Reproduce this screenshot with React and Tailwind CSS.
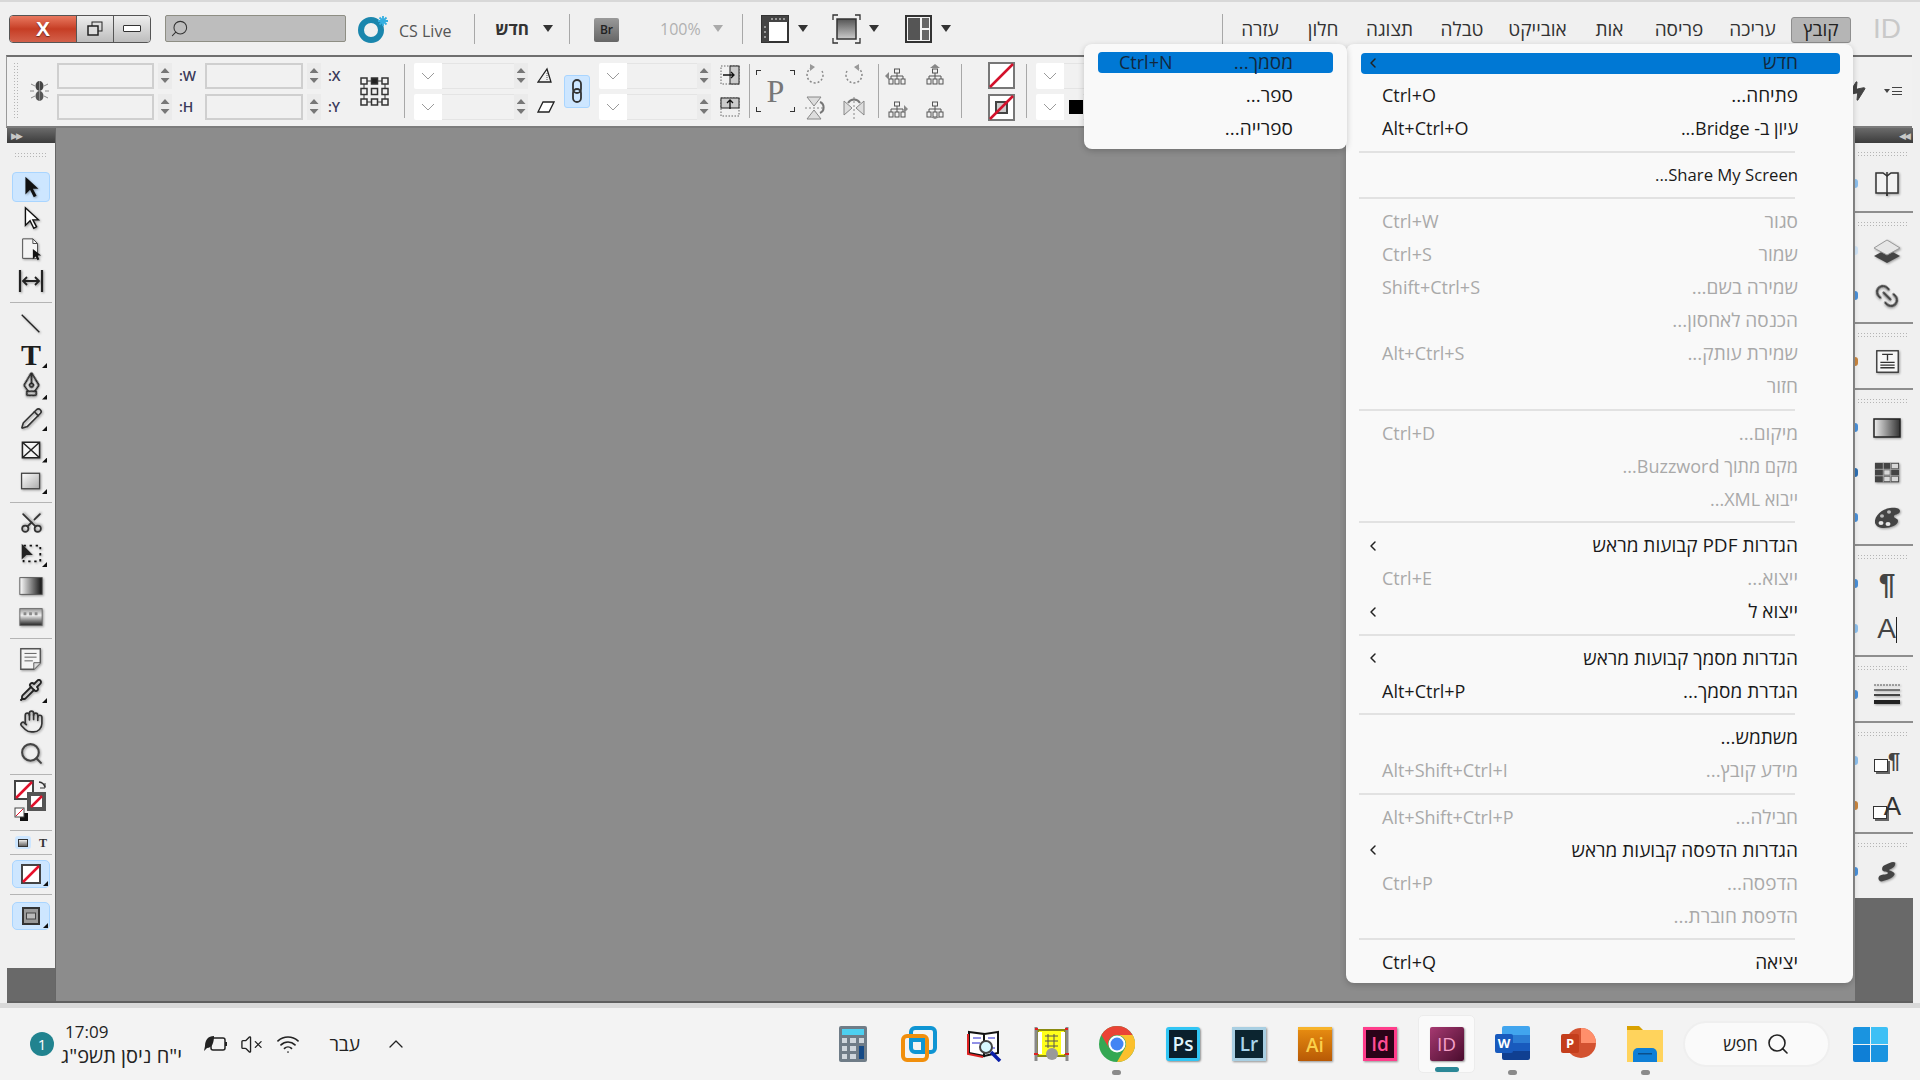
import { ChevronLeft, ChevronUp, Hand, Link2, Pencil, PenTool, Pipette, Scissors, Search, VolumeX, Wifi, Zap } from 'lucide-react';

const menuItems = [
  { t: 'חדש', active: true, sub: true },
  { t: 'פתיחה...', k: 'Ctrl+O' },
  { t: 'עיון ב- Bridge...', k: 'Alt+Ctrl+O', size: 'text-[18px]' },
  { sep: true },
  { t: 'Share My Screen...', size: 'text-[16.7px]' },
  { sep: true },
  { t: 'סגור', k: 'Ctrl+W', off: true },
  { t: 'שמור', k: 'Ctrl+S', off: true },
  { t: 'שמירה בשם...', k: 'Shift+Ctrl+S', off: true },
  { t: 'הכנסה לאחסון...', off: true },
  { t: 'שמירת עותק...', k: 'Alt+Ctrl+S', off: true },
  { t: 'חזור', off: true },
  { sep: true },
  { t: 'מיקום...', k: 'Ctrl+D', off: true },
  { t: 'מקם מתוך Buzzword...', off: true, size: 'text-[18px]' },
  { t: 'ייבוא XML...', off: true, size: 'text-[18px]' },
  { sep: true },
  { t: 'הגדרות PDF קבועות מראש', sub: true },
  { t: 'ייצוא...', k: 'Ctrl+E', off: true },
  { t: 'ייצוא ל', sub: true },
  { sep: true },
  { t: 'הגדרות מסמך קבועות מראש', sub: true },
  { t: 'הגדרת מסמך...', k: 'Alt+Ctrl+P' },
  { sep: true },
  { t: 'משתמש...' },
  { t: 'מידע קובץ...', k: 'Alt+Shift+Ctrl+I', off: true },
  { sep: true },
  { t: 'חבילה...', k: 'Alt+Shift+Ctrl+P', off: true },
  { t: 'הגדרות הדפסה קבועות מראש', sub: true },
  { t: 'הדפסה...', k: 'Ctrl+P', off: true },
  { t: 'הדפסת חוברת...', off: true },
  { sep: true },
  { t: 'יציאה', k: 'Ctrl+Q' },
];

const topMenu = [
  ['עזרה', 'w-[62px]'],
  ['חלון', 'w-[64px]'],
  ['תצוגה', 'w-[69px]'],
  ['טבלה', 'w-[76px]'],
  ['אובייקט', 'w-[75px]'],
  ['אות', 'w-[69px]'],
  ['פריסה', 'w-[70px]'],
  ['עריכה', 'w-[77px]'],
];

const Tri = ({ className = 'bg-[#333]' }) => (
  <span className={`block w-[10px] h-[7px] [clip-path:polygon(0_0,100%_0,50%_100%)] ${className}`} />
);

const Sep = ({ className = '' }) => <span className={`block w-[1px] bg-[#a8a8a8] ${className}`} />;

const Svg = ({ s = 28, children, className = '' }) => (
  <svg width={s} height={s} viewBox="0 0 28 28" fill="none" className={`drop-shadow-[1px_1px_1px_rgba(0,0,0,0.35)] ${className}`}>
    {children}
  </svg>
);

const Grip = ({ className = '' }) => (
  <div className={`h-[5px] bg-[radial-gradient(#b5b5b5_1px,transparent_1px)] bg-[length:3px_3px] ${className}`} />
);

function Spinner() {
  return (
    <div className="w-[14px] h-[26px] flex flex-col items-center justify-center gap-[5px] bg-[#ebebeb]">
      <span className="block w-[9px] h-[5px] bg-[#777] [clip-path:polygon(50%_0,100%_100%,0_100%)]" />
      <span className="block w-[9px] h-[5px] bg-[#777] [clip-path:polygon(0_0,100%_0,50%_100%)]" />
    </div>
  );
}

function Field({ label, w = 'w-[97px]' }) {
  return (
    <div className="flex items-center h-[26px]">
      <div className={`${w} h-[26px] border-2 border-[#cfcfcf] bg-[#f1f1f1]`} />
      <div className="ml-[4px]"><Spinner /></div>
      <span className="ml-[7px] w-[16px] text-[14px] font-semibold text-[#3a3a5a] leading-none">{label}</span>
    </div>
  );
}

function Combo({ w = 'w-[114px]', swatch }) {
  return (
    <div className={`${w} h-[26px] flex items-center bg-[#f1f1f1]`}>
      <div className="w-[28px] h-[26px] bg-white rounded-l-[2px] flex items-center justify-center text-[#9a9a9a]">
        <svg width="14" height="8" viewBox="0 0 14 8" fill="none"><path d="M1 1l6 6 6-6" stroke="currentColor" /></svg>
      </div>
      {swatch && <span className="ml-[5px] w-[14px] h-[14px] bg-black" />}
      <div className="flex-1 h-[26px] border-y border-[#e4e4e4]" />
      <Spinner />
    </div>
  );
}

function MenuRow({ item }) {
  if (item.sep) {
    return (
      <div className="h-[13.5px] flex items-center">
        <div className="-ml-[2px] w-[436px] h-[2px] bg-[#e2e2e2]" />
      </div>
    );
  }
  const color = item.active ? 'text-[#12283d]' : item.off ? 'text-[#a9a9a9]' : 'text-[#1a1a1a]';
  return (
    <div className={`h-[33px] flex items-center justify-between pl-[21px] pr-[42px] whitespace-nowrap ${color}`}>
      {item.sub ? <ChevronLeft size={16} strokeWidth={2.2} className="-ml-[17px] text-[#222]" /> : <span className="text-[18px]">{item.k}</span>}
      <span dir="rtl" className={item.size || 'text-[19px]'}>{item.t}</span>
    </div>
  );
}

function Tool({ children, corner, on }) {
  return (
    <div className="relative h-[31.5px] flex items-center justify-center">
      {on && <div className="absolute inset-x-[5px] top-[1px] bottom-[1px] rounded-[4px] bg-[#cde6ff] border border-[#a9d5ff]" />}
      <div className="relative flex">{children}</div>
      {corner && <span className="absolute right-[8px] bottom-[3px] w-[5px] h-[5px] bg-[#111] [clip-path:polygon(100%_0,100%_100%,0_100%)]" />}
    </div>
  );
}

const ToolSep = ({ h = 'h-[9.5px]' }) => (
  <div className={`${h} flex items-center justify-center`}><div className="w-[42px] h-[1px] bg-[#b4b4b4]" /></div>
);

function LeftTools() {
  return (
    <div className="w-[48px] flex flex-col">
      <div className="h-[15px] bg-gradient-to-b from-[#6b6b6b] to-[#3c3c3c] flex items-center pl-[4px] text-[#c8c8c8] text-[9px] leading-none tracking-[-2px]">▶▶</div>
      <div className="bg-[#f0f0f0] h-[825px]">
        <div className="h-[28px] pt-[9px] px-[7px]"><Grip /></div>
        <Tool on>
          <Svg s={26}><path d="M8 3v19l5-5 4 8 3-1.500-4-7.500h6z" fill="#111" /></Svg>
        </Tool>
        <Tool>
          <Svg s={26}><path d="M8 3v19l5-5 4 8 3-1.500-4-7.500h6z" fill="#fff" stroke="#111" strokeWidth="1.500" /></Svg>
        </Tool>
        <Tool>
          <Svg s={26}><path d="M5 2h11l5 5v16H5z" fill="#f4f4f4" stroke="#444" /><path d="M16 2v5h5" stroke="#444" /><path d="M16 13v11l3-3 2 4 2-1-2-4h4z" fill="#111" /></Svg>
        </Tool>
        <Tool>
          <Svg s={28}><path d="M3 3v22M25 3v22" stroke="#222" strokeWidth="2.200" /><path d="M7 14h14M10 10l-4 4 4 4M18 10l4 4-4 4" stroke="#222" strokeWidth="1.800" /></Svg>
        </Tool>
        <ToolSep h="h-[11px]" />
        <Tool>
          <Svg s={26}><path d="M4 4l19 19" stroke="#222" strokeWidth="1.500" /></Svg>
        </Tool>
        <Tool corner>
          <span className="font-['Liberation_Serif'] font-bold text-[30px] leading-none text-[#1c1c1c]">T</span>
        </Tool>
        <Tool corner>
          <PenTool size={23} strokeWidth={1.700} className="text-[#222] rotate-45 drop-shadow-[1px_1px_1px_rgba(0,0,0,0.35)]" />
        </Tool>
        <Tool corner>
          <Pencil size={23} strokeWidth={1.700} className="text-[#333] drop-shadow-[1px_1px_1px_rgba(0,0,0,0.35)]" />
        </Tool>
        <Tool corner>
          <Svg s={24}><path d="M4 5h20v18H4zM4 5l20 18M24 5L4 23" stroke="#222" strokeWidth="1.800" fill="#f4f4f4" /></Svg>
        </Tool>
        <Tool corner>
          <Svg s={24}>
            <defs><linearGradient id="rectg" x1="0" y1="0" x2="1" y2="1"><stop offset="0" stopColor="#fff" /><stop offset="1" stopColor="#aaa" /></linearGradient></defs>
            <rect x="3" y="5" width="21" height="18" fill="url(#rectg)" stroke="#444" strokeWidth="1.500" />
          </Svg>
        </Tool>
        <ToolSep h="h-[10px]" />
        <Tool>
          <Scissors size={25} strokeWidth={1.700} className="text-[#333] -rotate-90 drop-shadow-[1px_1px_1px_rgba(0,0,0,0.35)]" />
        </Tool>
        <Tool corner>
          <Svg s={26}><rect x="6" y="5" width="18" height="17" stroke="#111" strokeWidth="2" strokeDasharray="2.500 4" /><path d="M4 3v17l5-5h7z" fill="#222" /></Svg>
        </Tool>
        <Tool>
          <Svg s={26}>
            <defs><linearGradient id="gradg"><stop offset="0" stopColor="#fff" /><stop offset="1" stopColor="#111" /></linearGradient></defs>
            <rect x="2" y="5" width="24" height="18" fill="url(#gradg)" stroke="#555" />
          </Svg>
        </Tool>
        <Tool>
          <Svg s={26}>
            <defs><linearGradient id="feathg" x1="0" y1="0" x2="0" y2="1"><stop offset="0" stopColor="#999" /><stop offset="0.400" stopColor="#eee" /><stop offset="1" stopColor="#222" /></linearGradient></defs>
            <rect x="2" y="5" width="24" height="18" fill="url(#feathg)" stroke="#666" />
            <path d="M6 9h3v3H6zM12 9h3v3h-3zM18 9h3v3h-3z" fill="#888" />
          </Svg>
        </Tool>
        <ToolSep h="h-[10px]" />
        <Tool>
          <Svg s={26}><path d="M3 3h21v15l-7 7H3z" fill="#f4f4f4" stroke="#555" strokeWidth="1.500" /><path d="M7 8h13M7 12h13M7 16h9" stroke="#555" /><path d="M17 25v-7h7" fill="#ddd" stroke="#555" /></Svg>
        </Tool>
        <Tool corner>
          <Pipette size={24} strokeWidth={1.800} className="text-[#222] drop-shadow-[1px_1px_1px_rgba(0,0,0,0.35)]" />
        </Tool>
        <Tool>
          <Hand size={25} strokeWidth={1.600} className="text-[#333] drop-shadow-[1px_1px_1px_rgba(0,0,0,0.35)]" />
        </Tool>
        <Tool>
          <Search size={25} strokeWidth={2} className="text-[#444] drop-shadow-[1px_1px_1px_rgba(0,0,0,0.35)]" />
        </Tool>
        <ToolSep h="h-[10px]" />
        <div className="h-[46px] pl-[7px] pt-[1px]">
          <svg width="36" height="42" viewBox="0 0 36 42" fill="none">
            <rect x="1" y="1" width="18" height="18" fill="#fff" stroke="#444" strokeWidth="2" />
            <path d="M2 18L18 2" stroke="#e0112b" strokeWidth="2.500" />
            <path d="M25 2a7 7 0 0 1 6 5" stroke="#333" strokeWidth="1.500" />
            <path d="M31 3v5h-5" stroke="#333" />
            <rect x="15" y="14" width="15" height="15" fill="#fff" stroke="#555" strokeWidth="4" />
            <path d="M17 27l11-11" stroke="#e0112b" strokeWidth="2.500" />
            <rect x="6" y="33" width="8" height="8" fill="#111" />
            <rect x="1" y="28" width="9" height="9" fill="#fff" stroke="#444" />
            <path d="M2 36l7-7" stroke="#e0112b" />
          </svg>
        </div>
        <ToolSep h="h-[11px]" />
        <div className="h-[13px] flex items-center justify-center gap-[8px]">
          <span className="w-[16px] h-[13px] rounded-[3px] bg-[#cde6ff] flex items-center justify-center"><span className="w-[10px] h-[8px] bg-gradient-to-b from-[#eee] to-[#666] border border-[#333]" /></span>
          <span className="font-['Liberation_Serif'] font-bold text-[12px] leading-none text-[#333]">T</span>
        </div>
        <ToolSep h="h-[11px]" />
        <div className="relative h-[28px] mx-[5px] mb-[6px] rounded-[5px] bg-[#cde6ff] border border-[#a9d5ff] flex items-center justify-center">
          <svg width="20" height="20" viewBox="0 0 20 20"><rect x="1" y="1" width="18" height="18" fill="#fff" stroke="#444" strokeWidth="2" /><path d="M2 18L18 2" stroke="#e8112b" strokeWidth="2.500" /></svg>
          <span className="absolute right-[1px] bottom-[1px] w-[5px] h-[5px] bg-[#111] [clip-path:polygon(100%_0,100%_100%,0_100%)]" />
        </div>
        <ToolSep h="h-[1px]" />
        <div className="relative mt-[7px] h-[28px] mx-[5px] rounded-[5px] bg-[#cde6ff] border border-[#a9d5ff] flex items-center justify-center">
          <svg width="18" height="18" viewBox="0 0 18 18"><rect x="1" y="1" width="16" height="16" fill="#999" stroke="#333" strokeWidth="2" /><rect x="4.500" y="6" width="9" height="6" fill="#bbb" stroke="#444" /></svg>
          <span className="absolute right-[1px] bottom-[1px] w-[5px] h-[5px] bg-[#111] [clip-path:polygon(100%_0,100%_100%,0_100%)]" />
        </div>
      </div>
      <div className="flex-1 bg-[#696969]" />
    </div>
  );
}

function PanelIcon({ mark = 'bg-[#4a90d9]', children }) {
  return (
    <div className="h-[45px] flex items-center">
      <span className={`block w-[3px] h-[9px] rounded-r-full ${mark}`} />
      <div className="ml-[14px] w-[30px] flex justify-center">{children}</div>
    </div>
  );
}

function PanelSection({ h, children, last }) {
  return (
    <div className={`${h} bg-[#f0f0f0] ${last ? '' : 'border-b-2 border-[#8e8e8e]'}`}>
      <div className="h-[15px] pt-[8px] pl-[2px] pr-[5px]"><Grip /></div>
      {children}
    </div>
  );
}

function RightPanel() {
  return (
    <div className="w-[58px] flex flex-col">
      <div className="h-[15px] bg-gradient-to-b from-[#6b6b6b] to-[#3c3c3c] flex items-center justify-end pr-[4px] text-[#c8c8c8] text-[9px] leading-none tracking-[-2px]">◀◀</div>
      <PanelSection h="h-[70px]">
        <div className="pt-[3px]"><PanelIcon mark="bg-[#8cc0ee]">
          <Svg s={28}><path d="M14 6l-4-3H3v20h11l0 3 0-3h11V3h-7z" fill="#f3f3f3" stroke="#333" strokeWidth="1.500" /><path d="M14 2v24" stroke="#333" strokeWidth="1.500" /></Svg>
        </PanelIcon></div>
      </PanelSection>
      <PanelSection h="h-[111px]">
        <PanelIcon mark="bg-[#cfe4f7]">
          <Svg s={28}><path d="M14 12l13 7-13 7-13-7z" fill="#444" /><path d="M14 3l13 8-13 7-13-7z" fill="#e6e6e6" stroke="#999" /></Svg>
        </PanelIcon>
        <PanelIcon>
          <Link2 size={28} strokeWidth={2} className="text-[#444] rotate-45 drop-shadow-[1px_1px_1px_rgba(0,0,0,0.35)]" />
        </PanelIcon>
      </PanelSection>
      <PanelSection h="h-[66px]">
        <PanelIcon mark="bg-[#c9853e]">
          <Svg s={25}><rect x="2" y="2" width="24" height="24" fill="#f7f7f7" stroke="#333" strokeWidth="1.500" /><path d="M8 6h12M14 6v7M6 15h16M6 18h16M6 21h16" stroke="#333" strokeWidth="1.500" /></Svg>
        </PanelIcon>
      </PanelSection>
      <PanelSection h="h-[156px]">
        <PanelIcon>
          <Svg s={28}>
            <defs><linearGradient id="panelg"><stop offset="0" stopColor="#eee" /><stop offset="1" stopColor="#333" /></linearGradient></defs>
            <rect x="1" y="5" width="26" height="18" fill="url(#panelg)" stroke="#222" strokeWidth="1.500" />
          </Svg>
        </PanelIcon>
        <PanelIcon mark="bg-[#2d6fb2]">
          <Svg s={26}>
            <rect x="1" y="3" width="26" height="21" fill="#444" />
            <path d="M10 3v21M18 3v21M1 10h26M1 17h26" stroke="#aaa" />
            <path d="M11 11h6v5h-6zM19 18h7v5h-7zM19 4h7v5h-7zM11 18h6v5h-6z" fill="#d8d8d8" />
          </Svg>
        </PanelIcon>
        <PanelIcon>
          <Svg s={28}>
            <path d="M2 19C1 12 9 5 17 4c5-1 10 0 10 3 0 4-7 3-6 6 1 2 4 1 4 4 0 4-7 7-14 7-5 0-8-2-9-5z" fill="#444" />
            <ellipse cx="8" cy="19" rx="2.500" ry="2" fill="#e8e8e8" />
            <ellipse cx="15" cy="20" rx="2.500" ry="2" fill="#e8e8e8" />
            <ellipse cx="9" cy="12" rx="2" ry="1.800" fill="#bbb" />
            <ellipse cx="16" cy="8" rx="2" ry="1.800" fill="#bbb" />
          </Svg>
        </PanelIcon>
      </PanelSection>
      <PanelSection h="h-[111px]">
        <PanelIcon>
          <span className="font-['Liberation_Sans'] font-bold text-[30px] leading-none text-[#444]">¶</span>
        </PanelIcon>
        <PanelIcon mark="bg-[#8cc0ee]">
          <div className="flex items-end text-[#444]">
            <span className="font-['Liberation_Sans'] text-[28px] leading-none">A</span>
            <span className="w-[1px] h-[26px] bg-[#222]" />
          </div>
        </PanelIcon>
      </PanelSection>
      <PanelSection h="h-[66px]">
        <PanelIcon>
          <Svg s={28}><path d="M1 4h26" stroke="#555" strokeWidth="1" strokeDasharray="2 1" /><path d="M1 9h26" stroke="#555" strokeWidth="1.500" /><path d="M1 14h26" stroke="#444" strokeWidth="2" /><path d="M1 21h26" stroke="#222" strokeWidth="4" /></Svg>
        </PanelIcon>
      </PanelSection>
      <PanelSection h="h-[111px]">
        <PanelIcon mark="bg-[#8cc0ee]">
          <div className="flex items-end">
            <span className="w-[14px] h-[13px] bg-white border border-[#333] shadow-[2px_2px_0_#666]" />
            <span className="font-['Liberation_Sans'] font-bold text-[22px] leading-none text-[#444]">¶</span>
          </div>
        </PanelIcon>
        <PanelIcon mark="bg-[#c9853e]">
          <div className="flex items-end">
            <span className="w-[14px] h-[13px] bg-white border border-[#333] shadow-[2px_2px_0_#666]" />
            <span className="font-['Liberation_Sans'] text-[26px] leading-none text-[#333] -ml-[3px]">A</span>
          </div>
        </PanelIcon>
      </PanelSection>
      <PanelSection h="h-[64px]" last>
        <PanelIcon>
          <Svg s={26}><path d="M23 4c-3-2-7 1-10 2-3 1-5 3-4 6 1 2 6 1 6 3s-6 1-9 3c-3 3 0 7 3 6 4-1 11-3 13-7 1-3-3-4-6-5 2-2 7-2 7-8z" fill="#444" /></Svg>
        </PanelIcon>
      </PanelSection>
      <div className="flex-1 bg-[#696969]" />
    </div>
  );
}

function AppTile({ className, text, textClass = '' }) {
  return (
    <div className={`w-[34px] h-[34px] flex items-center justify-center shadow-[1px_1px_2px_rgba(0,0,0,0.4)] ${className}`}>
      <span className={`font-['Open_Sans'] text-[19px] font-semibold leading-none ${textClass}`}>{text}</span>
    </div>
  );
}

function Taskbar() {
  return (
    <div className="h-[72px] flex items-center pl-[30px] bg-[#f3f3f3] text-[#222] text-[16px]">
      <span className="w-[24px] h-[24px] rounded-full bg-[#21838f] text-white text-[15px] flex items-center justify-center">1</span>
      <div className="ml-[11px] w-[139px] flex flex-col leading-[24px]">
        <span className="text-[17px]">17:09</span>
        <span dir="rtl" className="w-[117px] text-[20px] whitespace-nowrap">י"ח ניסן תשפ"ג</span>
      </div>
      <svg width="24" height="20" viewBox="0 0 24 20" fill="none">
        <rect x="7" y="4" width="14" height="12" rx="2" stroke="#222" strokeWidth="1.500" />
        <path d="M21 8h2v4h-2" fill="#222" />
        <path d="M10 2C4 2 1 6 1 12l-1 5 3-3c5 0 7-5 7-12z" fill="#222" />
      </svg>
      <VolumeX size={23} strokeWidth={1.400} className="ml-[12px]" />
      <Wifi size={24} strokeWidth={1.700} className="ml-[13px]" />
      <span dir="rtl" className="ml-[29px] w-[31px] text-[19px] whitespace-nowrap">עבר</span>
      <ChevronUp size={24} strokeWidth={1.300} className="ml-[24px]" />

      <svg className="ml-[431px]" width="28" height="36" viewBox="0 0 28 36">
        <rect width="28" height="36" rx="2" fill="#6f7c87" />
        <rect x="3" y="3" width="22" height="6" fill="#4dd0f0" />
        <path d="M3 12h5v5H3zM11 12h6v5h-6zM20 12h5v5h-5zM3 20h5v5H3zM11 20h6v5h-6zM3 28h5v5H3zM11 28h6v5h-6z" fill="#cfd6dc" />
        <rect x="20" y="20" width="5" height="13" fill="#154a86" />
      </svg>
      <svg className="ml-[34px]" width="36" height="36" viewBox="0 0 36 36" fill="none">
        <rect x="10" y="2" width="24" height="24" rx="4" stroke="#0f95d3" strokeWidth="4" />
        <rect x="2" y="10" width="24" height="24" rx="4" stroke="#f18f0c" strokeWidth="4" />
        <path d="M10 14h12v12" stroke="#0f95d3" strokeWidth="4" />
      </svg>
      <svg className="ml-[30px]" width="36" height="36" viewBox="0 0 36 36" fill="none">
        <path d="M2 6l15 2v22L2 27z" fill="#fff" stroke="#111" strokeWidth="2" />
        <path d="M31 6L17 8v22l14-3z" fill="#fff" stroke="#111" strokeWidth="2" />
        <path d="M1 8v20l15 3" stroke="#d22" strokeWidth="2" />
        <path d="M6 12h8M5 17h8M21 12h7M21 22h7" stroke="#22c" />
        <circle cx="19" cy="21" r="6" fill="#d8f8ff" stroke="#444" strokeWidth="2" />
        <path d="M24 26l9 9" stroke="#0a1ea8" strokeWidth="3.500" />
      </svg>
      <svg className="ml-[30px]" width="37" height="36" viewBox="0 0 37 36" fill="none">
        <rect x="5" y="4" width="27" height="26" fill="#ffff1a" stroke="#8a8a10" strokeWidth="2" />
        <path d="M3 1v34M34 1v34" stroke="#888" strokeWidth="3" />
        <rect x="5" y="6" width="4" height="22" fill="#fff" />
        <rect x="28" y="6" width="4" height="22" fill="#fff" />
        <path d="M12 10h13M12 15h13M12 20h13M15 8v14M21 8v14" stroke="#555" />
        <circle cx="19" cy="28" r="6" fill="#999" />
        <path d="M1 28h4M32 28h4M2 3h3M32 3h3" stroke="#d22" strokeWidth="2" />
      </svg>
      <div className="relative ml-[29px] flex">
        <svg width="36" height="36" viewBox="0 0 36 36">
          <circle cx="18" cy="18" r="18" fill="#34a853" />
          <path d="M33.600 9A18 18 0 0 1 18 36l7.800-13.500A9 9 0 0 0 18 9z" fill="#fbc02d" />
          <path d="M18 0a18 18 0 0 1 15.600 9H18a9 9 0 0 0-7.800 13.500L2.400 9A18 18 0 0 1 18 0z" fill="#ea4335" />
          <circle cx="18" cy="18" r="8.500" fill="#fff" />
          <circle cx="18" cy="18" r="6.500" fill="#4285f4" />
        </svg>
        <span className="absolute left-[13px] top-[44px] w-[9px] h-[5px] rounded-full bg-[#8a8a8a]" />
      </div>
      <AppTile className="ml-[31px] bg-[#0a1f2c] border-[3px] border-[#31c5f4] rounded-[3px]" text="Ps" textClass="text-[#dff4fd]" />
      <AppTile className="ml-[32px] bg-[#0c2530] border-[3px] border-[#a9cfe2]" text="Lr" textClass="text-[#a9d4ea]" />
      <AppTile className="ml-[32px] bg-gradient-to-b from-[#e58a10] to-[#b85a06] border-t-[3px] border-[#f7b32b]" text="Ai" textClass="text-[#fbd04b] font-bold" />
      <AppTile className="ml-[31px] bg-[#2a0318] border-[3px] border-[#ff3d8b]" text="Id" textClass="text-[#ff4d94]" />
      <div className="relative ml-[21px] w-[57px] h-[58px] rounded-[5px] bg-[#fafafa] border border-[#ececec] flex items-center justify-center">
        <div className="w-[34px] h-[34px] rounded-[2px] bg-gradient-to-br from-[#a73a72] to-[#4a0c2e] flex items-center justify-center shadow-[1px_1px_2px_rgba(0,0,0,0.4)]">
          <span className="font-['Open_Sans'] text-[19px] leading-none text-[#f5a0c8]">ID</span>
        </div>
        <span className="absolute left-[16px] bottom-[0px] w-[24px] h-[5px] rounded-full bg-[#2b8796]" />
      </div>
      <div className="relative ml-[20px] w-[35px] h-[36px]">
        <div className="absolute right-0 top-0 w-[28px] h-[34px] rounded-[2px] bg-[linear-gradient(#41a5ee_25%,#2b7cd3_25%,#2b7cd3_50%,#185abd_50%,#185abd_75%,#103f91_75%)]" />
        <div className="absolute left-0 top-[8px] w-[18px] h-[19px] rounded-[2px] bg-[#185abd] text-white text-[13px] font-bold flex items-center justify-center font-['Open_Sans']">W</div>
        <span className="absolute left-[13px] top-[44px] w-[9px] h-[5px] rounded-full bg-[#8a8a8a]" />
      </div>
      <div className="relative ml-[31px] w-[35px] h-[36px]">
        <svg className="absolute right-0 top-0" width="30" height="34" viewBox="0 0 34 34">
          <circle cx="17" cy="17" r="17" fill="#d35230" />
          <path d="M17 0a17 17 0 0 1 17 17H17z" fill="#ff8f6b" />
        </svg>
        <div className="absolute left-0 top-[8px] w-[18px] h-[19px] rounded-[2px] bg-[#c43e1c] text-white text-[13px] font-bold flex items-center justify-center font-['Open_Sans']">P</div>
      </div>
      <div className="relative ml-[31px] flex">
        <svg width="36" height="36" viewBox="0 0 36 36">
          <path d="M0 0h12l4 4h20v6H0z" fill="#d9a100" />
          <rect y="4" width="36" height="32" fill="#ffd35c" />
          <path d="M6 36v-9a5 5 0 0 1 5-5h14a5 5 0 0 1 5 5v9z" fill="#0f7fd6" />
          <rect x="11" y="27" width="14" height="1.500" fill="#0a4f8a" />
        </svg>
        <span className="absolute left-[14px] top-[44px] w-[9px] h-[5px] rounded-full bg-[#8a8a8a]" />
      </div>
      <div className="ml-[20px] w-[147px] h-[46px] rounded-full bg-[#fafafa] border-2 border-[#efefef] flex items-center justify-center gap-[8px] text-[18px]">
        <span dir="rtl">חפש</span>
        <Search size={24} strokeWidth={1.600} />
      </div>
      <div className="ml-[23px] w-[35px] h-[35px] grid grid-cols-2 gap-[1px]">
        <span className="bg-[#1a94e0] rounded-tl-[2px]" />
        <span className="bg-[#3ec0f5] rounded-tr-[2px]" />
        <span className="bg-[#0f7fd6] rounded-bl-[2px]" />
        <span className="bg-[#1a94e0] rounded-br-[2px]" />
      </div>
    </div>
  );
}

function OrgIcon({ arrow }) {
  return (
    <svg width="23" height="22" viewBox="0 0 23 22" fill="none">
      <g stroke="#555">
        <rect x="9.500" y="5" width="5" height="4" />
        <path d="M12 9v3M6 15v-3h12v3M12 12v3" />
        <rect x="4" y="15" width="4" height="5" />
        <rect x="10" y="15" width="4" height="5" />
        <rect x="16" y="15" width="4" height="5" />
      </g>
      <path d={arrow} fill="#888" />
    </svg>
  );
}

export default function App() {
  return (
    <div dir="ltr" className="relative w-[1920px] h-[1080px] overflow-hidden flex flex-col bg-[#f3f3f3] [font-family:'Open_Sans','Liberation_Sans',sans-serif] text-[16px]">
      <div className="h-[1008px] flex flex-col bg-[#f0f0f0] border-t-2 border-[#d8d8d8] border-b-[5px] border-b-[#d9d9d9]">
        {/* top bar */}
        <div className="h-[53px] flex items-center pl-[9px]">
          <div className="w-[142px] h-[28px] flex rounded-[4px] border border-[#555] overflow-hidden">
            <div className="w-[66px] bg-gradient-to-b from-[#e9785f] via-[#c63d24] to-[#d3604a] flex items-center justify-center text-white font-bold text-[21px] font-['Liberation_Sans'] [text-shadow:0_1px_1px_rgba(0,0,0,0.5)]">X</div>
            <div className="w-[38px] bg-gradient-to-b from-[#eeeeee] to-[#bdbdbd] border-x border-[#555] flex items-center justify-center">
              <svg width="18" height="16" viewBox="0 0 18 16" fill="none"><rect x="6" y="1" width="10" height="9" stroke="#222" /><rect x="2" y="5" width="10" height="9" fill="#ddd" stroke="#222" strokeWidth="1.500" /></svg>
            </div>
            <div className="flex-1 bg-gradient-to-b from-[#eeeeee] to-[#bdbdbd] flex items-center justify-center">
              <span className="w-[18px] h-[7px] bg-white border border-[#333] rounded-[1px]" />
            </div>
          </div>
          <div className="ml-[14px] w-[181px] h-[27px] bg-[#bdbdbd] border border-[#8e8e84] flex items-center pl-[4px] rounded-[2px]">
            <Search size={19} strokeWidth={1.300} className="text-[#333] -scale-x-100" />
          </div>
          <svg className="ml-[12px]" width="32" height="30" viewBox="0 0 32 30" fill="none">
            <circle cx="13" cy="16" r="10" stroke="#1a86ad" strokeWidth="6" />
            <path d="M25 2v10M20 7h10M21.500 3.500l7 7M28.500 3.500l-7 7" stroke="#34aee0" strokeWidth="1.800" />
          </svg>
          <span className="ml-[9px] w-[52px] text-[16px] text-[#555] mt-[4px] whitespace-nowrap">CS Live</span>
          <Sep className="ml-[23px] h-[30px]" />
          <span dir="rtl" className="ml-[15px] w-[39px] font-bold text-[17px] text-[#333] whitespace-nowrap">חדש</span>
          <div className="ml-[14px]"><Tri /></div>
          <Sep className="ml-[16px] h-[30px]" />
          <span className="ml-[24px] w-[25px] h-[24px] mt-[3px] rounded-[2px] bg-gradient-to-b from-[#9a9a9a] to-[#666] text-[#222] text-[12px] font-semibold flex items-center justify-center">Br</span>
          <span className="ml-[41px] w-[40px] text-[16px] text-[#b0b0b0]">100%</span>
          <div className="ml-[13px]"><Tri className="bg-[#aaa]" /></div>
          <Sep className="ml-[19px] h-[30px]" />
          <svg className="ml-[17px]" width="30" height="30" viewBox="0 0 30 30" fill="none">
            <rect x="2" y="2" width="26" height="26" fill="#fff" stroke="#333" strokeWidth="2" />
            <rect x="2" y="2" width="26" height="6" fill="#444" />
            <rect x="2" y="2" width="7" height="26" fill="#444" />
            <path d="M11 5h2M15 5h2M19 5h2M23 5h2M5 12v2M5 17v2M5 22v2" stroke="#eee" />
          </svg>
          <div className="ml-[8px]"><Tri /></div>
          <svg className="ml-[24px]" width="29" height="30" viewBox="0 0 29 30" fill="none">
            <defs><linearGradient id="scr" x1="0" y1="0" x2="0" y2="1"><stop offset="0" stopColor="#555" /><stop offset="1" stopColor="#ccc" /></linearGradient></defs>
            <rect x="5" y="5" width="19" height="20" fill="url(#scr)" stroke="#333" strokeWidth="1.500" />
            <path d="M1 6V1h5M23 1h5v5M1 24v5h5M23 29h5v-5" stroke="#333" strokeWidth="1.300" />
          </svg>
          <div className="ml-[8px]"><Tri /></div>
          <svg className="ml-[26px]" width="27" height="28" viewBox="0 0 27 28">
            <rect x="1" y="1" width="25" height="26" fill="#f4f4f4" stroke="#333" strokeWidth="2" />
            <rect x="3" y="3" width="12" height="22" fill="#555" />
            <rect x="17" y="3" width="7" height="10" fill="#666" />
            <rect x="17" y="15" width="7" height="10" fill="#666" />
          </svg>
          <div className="ml-[9px]"><Tri /></div>
          <Sep className="ml-[271px] h-[30px]" />
          <div className="ml-[6px] flex items-center h-[30px] mt-[2px] text-[#333] text-[19px] whitespace-nowrap">
            {topMenu.map(([t, w]) => (
              <span key={t} dir="rtl" className={`${w} text-center`}>{t}</span>
            ))}
            <span dir="rtl" className="w-[60px] h-[26px] flex items-center justify-center rounded-[3px] bg-[#b5b5b5] border border-[#8e8e8e] text-[#222]">קובץ</span>
          </div>
          <span className="ml-[22px] text-[28px] font-['Liberation_Sans'] font-light text-[#c9c9c9] leading-none">ID</span>
        </div>

        {/* control bar */}
        <div className="ml-[6px] mr-[8px] h-[73px] pb-[1px] flex items-center border-t-2 border-b-2 border-l border-t-[#6f6f6f] border-b-[#7c7c7c] border-l-[#9a9a9a] bg-[#f1f1f1]">
          <div className="ml-[6px] w-[5px] h-[58px] bg-[radial-gradient(#b5b5b5_1px,transparent_1px)] bg-[length:3px_3px]" />
          <svg className="ml-[12px]" width="19" height="22" viewBox="0 0 19 22" fill="none">
            <ellipse cx="9.500" cy="6" rx="4" ry="5" fill="#444" />
            <ellipse cx="9.500" cy="16" rx="4" ry="5" fill="#555" />
            <path d="M9.500 1v20M1 4l4 2M18 4l-4 2M1 18l4-2M18 18l-4-2M0 11h4M15 11h4" stroke="#888" />
          </svg>
          <div className="ml-[8px] flex flex-col gap-[5px]">
            <Field label=":W" />
            <Field label=":H" />
          </div>
          <div className="ml-[10px] flex flex-col gap-[5px]">
            <Field label=":X" w="w-[98px]" />
            <Field label=":Y" w="w-[98px]" />
          </div>
          <svg className="ml-[16px]" width="29" height="29" viewBox="0 0 29 29" fill="none" stroke="#333" strokeWidth="1.500">
            <rect x="1" y="1" width="6" height="6" />
            <rect x="11.500" y="1" width="6" height="6" fill="#222" />
            <rect x="22" y="1" width="6" height="6" />
            <rect x="1" y="11.500" width="6" height="6" />
            <rect x="11.500" y="11.500" width="6" height="6" />
            <rect x="22" y="11.500" width="6" height="6" />
            <rect x="1" y="22" width="6" height="6" />
            <rect x="11.500" y="22" width="6" height="6" />
            <rect x="22" y="22" width="6" height="6" />
            <path d="M7 4h4M18 4h4M7 25h4M18 25h4M4 7v4M25 7v4M4 18v4M25 18v4" strokeWidth="1" />
          </svg>
          <Sep className="ml-[15px] h-[54px]" />
          <div className="ml-[9px] flex flex-col gap-[5px]">
            <Combo />
            <Combo />
          </div>
          <div className="ml-[9px] flex flex-col gap-[14px]">
            <svg width="16" height="17" viewBox="0 0 16 17" fill="none"><path d="M1 15L10 2l4 13z" stroke="#222" strokeWidth="1.300" /><path d="M10 6v8" stroke="#555" strokeDasharray="1 1" /></svg>
            <svg width="18" height="17" viewBox="0 0 18 17" fill="none"><path d="M1 14L6 4h11l-5 10z" fill="#fff" stroke="#222" strokeWidth="1.300" /></svg>
          </div>
          <div className="ml-[9px] w-[26px] h-[33px] rounded-[3px] bg-[#cde6ff] border border-[#a9d5ff] flex items-center justify-center">
            <svg width="10" height="24" viewBox="0 0 10 24" fill="none"><rect x="1" y="1" width="8" height="13" rx="4" stroke="#333" strokeWidth="1.800" /><rect x="1" y="10" width="8" height="13" rx="4" stroke="#333" strokeWidth="1.800" /></svg>
          </div>
          <div className="ml-[9px] flex flex-col gap-[5px]">
            <Combo w="w-[112px]" />
            <Combo w="w-[112px]" />
          </div>
          <div className="ml-[8px] flex flex-col gap-[8px]">
            <svg width="22" height="24" viewBox="0 0 22 24" fill="none"><path d="M2 3h18v18H2z" stroke="#666" strokeDasharray="1.500 1.500" /><rect x="11" y="3" width="9" height="18" fill="#ccc" stroke="#222" /><path d="M4 12h11M12 9l3 3-3 3" stroke="#111" strokeWidth="1.300" /></svg>
            <svg width="22" height="24" viewBox="0 0 22 24" fill="none"><path d="M2 3h18v18H2z" stroke="#666" strokeDasharray="1.500 1.500" /><rect x="2" y="3" width="18" height="10" fill="#ccc" stroke="#222" /><path d="M11 14V5M8 8l3-3 3 3" stroke="#111" strokeWidth="1.300" /></svg>
          </div>
          <Sep className="ml-[8px] h-[54px]" />
          <div className="ml-[6px] relative w-[39px] h-[54px] flex items-center justify-center text-[#777] font-['Liberation_Serif'] text-[32px] leading-none border-0">
            P
            <span className="absolute left-0 top-[6px] w-[5px] h-[5px] border-l border-t border-[#333]" />
            <span className="absolute right-0 top-[6px] w-[5px] h-[5px] border-r border-t border-[#333]" />
            <span className="absolute left-0 bottom-[6px] w-[5px] h-[5px] border-l border-b border-[#333]" />
            <span className="absolute right-0 bottom-[6px] w-[5px] h-[5px] border-r border-b border-[#333]" />
          </div>
          <div className="ml-[9px] grid grid-cols-2 gap-x-[17px] gap-y-[10px]">
            {[0, 1].map((i) => (
              <svg key={i} width="22" height="23" viewBox="0 0 22 23" fill="none" className={i ? '-scale-x-100' : ''}>
                <path d="M18 8a8 8 0 1 1-8-4" stroke="#8a8a8a" strokeWidth="1.500" strokeDasharray="2 2" />
                <path d="M6 1l5 3-5 4z" fill="#999" />
              </svg>
            ))}
            <svg width="22" height="24" viewBox="0 0 22 24" fill="none"><path d="M3 1h14l-7 9zM3 23h14l-7-9z" fill="#ddd" stroke="#888" /><path d="M1 12h20" stroke="#888" strokeDasharray="2 2" /><path d="M16 6a6 6 0 0 1 0 11" stroke="#777" strokeWidth="2" /></svg>
            <svg width="22" height="24" viewBox="0 0 22 24" fill="none"><path d="M1 5v14l8-7zM21 5v14l-8-7z" fill="#ddd" stroke="#888" /><path d="M11 1v22" stroke="#888" strokeDasharray="2 2" /><path d="M5 7a7 7 0 0 1 12 0" stroke="#777" strokeWidth="2" /></svg>
          </div>
          <Sep className="ml-[13px] h-[54px]" />
          <div className="ml-[6px] grid grid-cols-2 gap-x-[15px] gap-y-[11px]">
            <OrgIcon arrow="M0 12l4-4v8z" />
            <OrgIcon arrow="M12 0l5 4H7z" />
            <OrgIcon arrow="M23 12l-4-4v8z" />
            <OrgIcon arrow="M12 22l-5-2h10z" />
          </div>
          <Sep className="ml-[15px] h-[54px]" />
          <div className="ml-[26px] flex flex-col gap-[5px]">
            <svg width="27" height="27" viewBox="0 0 27 27"><rect x="1" y="1" width="25" height="25" fill="#fff" stroke="#777" strokeWidth="2" /><path d="M2 25L25 2" stroke="#d3112b" strokeWidth="2.500" /></svg>
            <svg width="27" height="27" viewBox="0 0 27 27" fill="none"><rect x="1" y="1" width="25" height="25" fill="#fff" stroke="#777" strokeWidth="2" /><rect x="8" y="8" width="11" height="11" fill="#ccc" stroke="#444" strokeWidth="2" /><path d="M2 25L25 2" stroke="#d3112b" strokeWidth="2.500" /></svg>
          </div>
          <Sep className="ml-[11px] h-[54px]" />
          <div className="ml-[9px] flex flex-col gap-[5px]">
            <Combo w="w-[100px]" />
            <Combo w="w-[100px]" swatch />
          </div>
          <div className="ml-auto mr-[10px] flex items-center gap-[16px] text-[#444]">
            <Zap size={22} fill="#444" strokeWidth={1} className="-rotate-12" />
            <span className="flex items-center gap-[2px]">
              <span className="block w-[6px] h-[4px] bg-[#444] [clip-path:polygon(0_0,100%_0,50%_100%)]" />
              <span className="block w-[10px] h-[8px] border-y border-[#444] bg-[linear-gradient(#444,#444)] bg-[length:100%_1px] bg-center bg-no-repeat" />
            </span>
          </div>
        </div>

        {/* work area */}
        <div className="flex-1 flex ml-[7px] mr-[7px] border-b-2 border-[#5f5f5f] min-h-0">
          <LeftTools />
          <div className="flex-1 bg-[#8c8c8c] border-l border-[#666]" />
          <RightPanel />
        </div>
      </div>

      <Taskbar />

      {/* file menu */}
      <div className="absolute left-[1346px] top-[44px] w-[507px] h-[939px] pt-[2px] pl-[15px] pr-[13px] rounded-[8px] bg-[#f9f9f9] shadow-[0_2px_6px_rgba(0,0,0,0.2)]">
        <div className="relative">
          <div className="absolute left-0 right-0 top-[7px] h-[21px] rounded-[4px] bg-[#0078d4]" />
          <div className="relative">
            {menuItems.map((item, i) => (
              <MenuRow key={i} item={item} />
            ))}
          </div>
        </div>
      </div>

      {/* submenu */}
      <div className="absolute left-[1084px] top-[44px] w-[263px] h-[105px] pt-[2px] px-[14px] rounded-[8px] bg-[#f9f9f9] shadow-[0_2px_6px_rgba(0,0,0,0.2)] text-[#1a1a1a] whitespace-nowrap">
        <div className="relative">
          <div className="absolute inset-x-0 top-[6px] h-[21px] rounded-[4px] bg-[#0078d4]" />
          <div className="relative h-[33px] flex items-center justify-between pl-[21px] pr-[40px] text-[#12283d]">
            <span className="text-[18px]">Ctrl+N</span>
            <span dir="rtl" className="text-[19px]">מסמך...</span>
          </div>
          <div className="h-[33px] flex items-center justify-end pr-[40px]"><span dir="rtl" className="text-[19px]">ספר...</span></div>
          <div className="h-[33px] flex items-center justify-end pr-[40px]"><span dir="rtl" className="text-[19px]">ספרייה...</span></div>
        </div>
      </div>
    </div>
  );
}
